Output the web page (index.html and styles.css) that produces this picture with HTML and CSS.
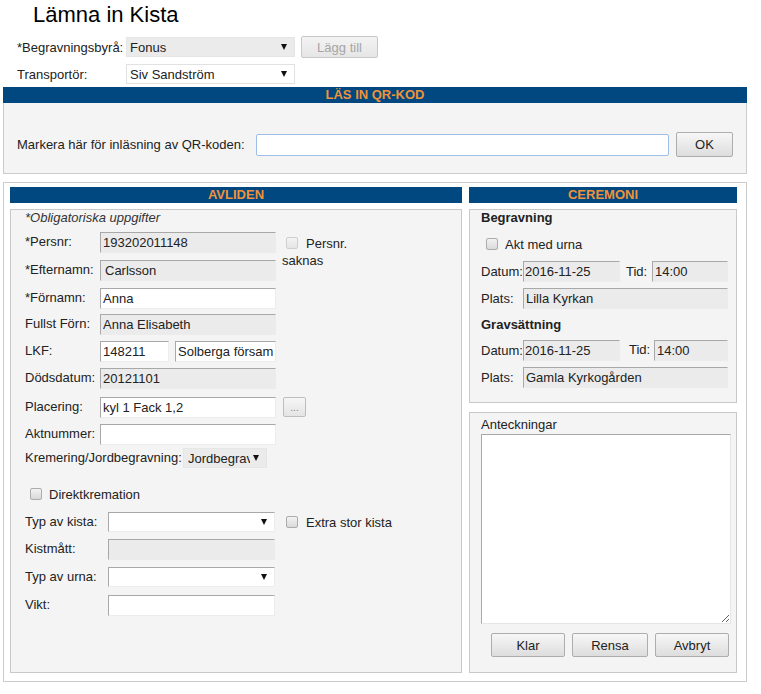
FILE: index.html
```html
<!DOCTYPE html>
<html lang="sv">
<head>
<meta charset="utf-8">
<title>Lämna in Kista</title>
<link rel="stylesheet" href="styles.css">
</head>
<body>
<h1 class="title">Lämna in Kista</h1>

<div class="top-row">
  <label class="top-label">*Begravningsbyrå:</label>
  <span class="select"><select class="sel sel-top sel-gray" disabled><option>Fonus</option></select></span>
  <button class="btn btn-add" disabled>Lägg till</button>
</div>
<div class="top-row top-row-2">
  <label class="top-label">Transportör:</label>
  <span class="select"><select class="sel sel-top sel-light"><option>Siv Sandström</option></select></span>
</div>

<section class="qr">
  <div class="bar">LÄS IN QR-KOD</div>
  <div class="qr-body">
    <div class="qr-row">
      <label class="qr-label">Markera här för inläsning av QR-koden:</label>
      <input class="qr-input" type="text">
      <button class="btn btn-ok">OK</button>
    </div>
  </div>
</section>

<section class="main">
  <div class="col">
    <div class="bar">AVLIDEN</div>
    <div class="fs fs-avliden">
      <div class="note">*Obligatoriska uppgifter</div>

      <div class="grid-person">
        <label class="lbl">*Persnr:</label>
        <input class="inp ro w176" value="193202011148" readonly>
        <div class="saknas"><span class="cb cb-off"></span>Persnr. saknas</div>

        <label class="lbl">*Efternamn:</label>
        <input class="inp ro w176 pad4" value="Carlsson" readonly>

        <label class="lbl">*Förnamn:</label>
        <input class="inp w176" value="Anna">

        <label class="lbl">Fullst Förn:</label>
        <input class="inp ro w176" value="Anna Elisabeth" readonly>

        <label class="lbl">LKF:</label>
        <div class="lkf">
          <input class="inp w69" value="148211">
          <input class="inp w101" value="Solberga församling">
        </div>

        <label class="lbl">Dödsdatum:</label>
        <input class="inp ro w176" value="20121101" readonly>

        <label class="lbl">Placering:</label>
        <input class="inp w176" value="kyl 1 Fack 1,2">
        <button class="btn btn-dots">...</button>

        <label class="lbl">Aktnummer:</label>
        <input class="inp w176" value="">

        <div class="krem">
          <label class="lbl lbl-krem">Kremering/Jordbegravning:</label>
          <span class="select"><select class="sel sel-krem sel-gray"><option>Jordbegravning</option></select></span>
        </div>
      </div>

      <div class="cb-row direkt"><span class="cb"></span>Direktkremation</div>

      <div class="grid-kista">
        <label class="lbl">Typ av kista:</label>
        <span class="select"><select class="sel sel-kista"><option></option></select></span>
        <div class="cb-row extra"><span class="cb"></span>Extra stor kista</div>

        <label class="lbl">Kistmått:</label>
        <input class="inp ro w167" value="" readonly>

        <label class="lbl">Typ av urna:</label>
        <span class="select"><select class="sel sel-kista"><option></option></select></span>

        <label class="lbl">Vikt:</label>
        <input class="inp w167" value="">
      </div>
    </div>
  </div>

  <div class="col">
    <div class="bar">CEREMONI</div>
    <div class="fs fs-cer">
      <div class="sub">Begravning</div>
      <div class="cb-row akt"><span class="cb"></span>Akt med urna</div>
      <div class="cer-row first">
        <label class="cer-lbl">Datum:</label>
        <input class="inp ro w97 tight" value="2016-11-25" readonly>
        <label class="tid">Tid:</label>
        <input class="inp ro w76" value="14:00" readonly>
      </div>
      <div class="cer-row">
        <label class="cer-lbl">Plats:</label>
        <input class="inp ro w205" value="Lilla Kyrkan" readonly>
      </div>
      <div class="sub sub-grav">Gravsättning</div>
      <div class="cer-row second">
        <label class="cer-lbl">Datum:</label>
        <input class="inp ro w97 tight" value="2016-11-25" readonly>
        <label class="tid tid-2">Tid:</label>
        <input class="inp ro w74" value="14:00" readonly>
      </div>
      <div class="cer-row">
        <label class="cer-lbl">Plats:</label>
        <input class="inp ro w205" value="Gamla Kyrkogården" readonly>
      </div>
    </div>

    <div class="fs fs-notes">
      <label class="notes-lbl">Anteckningar</label>
      <textarea class="notes"></textarea>
      <div class="actions">
        <button class="btn btn-act w74">Klar</button>
        <button class="btn btn-act w76b">Rensa</button>
        <button class="btn btn-act w74">Avbryt</button>
      </div>
    </div>
  </div>
</section>
</body>
</html>
```

FILE: styles.css
```css
* { box-sizing: border-box; }

html, body { margin: 0; background: #fff; }

body {
  padding: 0 3px;
  font-family: "Liberation Sans", Arial, sans-serif;
  font-size: 13px;
  color: #222;
}

.title {
  margin: 0;
  padding: 2px 0 0 30px;
  font-size: 22px;
  font-weight: normal;
  line-height: 26px;
  color: #000;
}

/* top rows */
.top-row {
  display: flex;
  align-items: center;
  height: 22px;
  margin-top: 8px;
  padding-left: 14px;
}
.top-row-2 { height: 20px; margin-top: 6px; }
.top-label { width: 109px; }

.select { position: relative; display: inline-block; }
.select::after {
  content: "";
  position: absolute;
  right: 8px;
  top: 50%;
  margin-top: -3px;
  border-left: 3px solid transparent;
  border-right: 3px solid transparent;
  border-top: 6px solid #111;
  pointer-events: none;
}

.sel {
  -webkit-appearance: none;
  appearance: none;
  display: block;
  font: inherit;
  color: #222;
  height: 20px;
  margin: 0;
  padding: 0 16px 0 3px;
  border: 1px solid;
  border-color: #a8a8a8 #ececec #ececec #a8a8a8;
  border-radius: 0;
  background: #fff;
  opacity: 1;
}
.sel-top { width: 169px; }
.sel-gray { background: #ebebeb; border-color: #e6e6e6; color: #222; }
.sel-light { border-color: #e2e2e2; }
.sel-krem { width: 84px; padding-left: 4px; }
.sel-kista { width: 167px; }

.btn {
  font: inherit;
  color: #222;
  margin: 0;
  padding: 0;
  border: 1px solid #adadad;
  border-radius: 2px;
  background: linear-gradient(#f7f7f7, #dddddd);
}
.btn-add {
  margin-left: 6px;
  width: 77px;
  height: 22px;
  color: #a6a6a6;
  border-color: #c8c8c8;
  background: linear-gradient(#f3f3f3, #e6e6e6);
}

/* headers */
.bar {
  height: 16px;
  background: #00487f;
  color: #f0923a;
  font-weight: bold;
  font-size: 13px;
  line-height: 16px;
  text-align: center;
}

/* QR section */
.qr { margin-top: 3px; width: 744px; }
.qr-body {
  height: 71px;
  padding: 29px 0 0 13px;
  border: 1px solid #cccccc;
  border-top: 0;
  background: #f4f4f4;
}
.qr-row { display: flex; align-items: center; height: 25px; }
.qr-label { width: 239px; flex: none; }
.qr-input {
  width: 413px;
  height: 22px;
  font: inherit;
  border: 1px solid #9ec0e8;
  border-radius: 2px;
  background: #fff;
  margin: 0;
}
.btn-ok { margin-left: 7px; width: 57px; height: 25px; }

/* main */
.main {
  margin-top: 8px;
  width: 744px;
  border: 1px solid #cccccc;
  padding: 4px 9px 8px 6px;
  display: grid;
  grid-template-columns: 452px 268px;
  column-gap: 7px;
}

.fs {
  border: 1px solid #c9c9c9;
  background: #f4f4f4;
}
.fs-avliden { margin-top: 6px; height: 464px; padding-left: 14px; }
.note { font-style: italic; line-height: 15px; color: #333; }

.lbl { height: 20px; line-height: 20px; white-space: nowrap; }

.inp {
  height: 21px;
  margin: 0;
  padding: 0 2px;
  font: inherit;
  color: #222;
  border: 1px solid;
  border-color: #a8a8a8 #ececec #ececec #a8a8a8;
  border-radius: 0;
  background: #fff;
}
.ro { background: #ebebeb; }
.pad4 { padding-left: 4px; }
.tight { padding-left: 1px; }
.w176 { width: 176px; }
.w167 { width: 167px; }
.w69 { width: 69px; }
.w101 { width: 101px; }
.w97 { width: 97px; }
.w76 { width: 76px; }
.w74 { width: 74px; }
.w205 { width: 205px; }

.grid-person {
  margin-top: 7px;
  display: grid;
  grid-template-columns: 75px 176px 1fr;
  grid-template-rows: 28px 28px 26px 27px 27px 29px 27px 24px 20px;
  align-items: start;
}
.grid-person > .lbl,
.grid-kista > .lbl { grid-column: 1; }
.saknas {
  grid-column: 3;
  grid-row: 1 / span 2;
  margin-left: 6px;
  padding-top: 3px;
  width: 75px;
  line-height: 17px;
}
.saknas .cb { margin: 0 8px 0 4px; vertical-align: -1px; }

.lkf { display: flex; gap: 6px; }
.btn-dots {
  grid-column: 3;
  justify-self: start;
  margin-left: 7px;
  width: 23px;
  height: 20px;
  font-size: 10px;
  color: #888;
  border-color: #bdbdbd;
  background: linear-gradient(#f6f6f6, #e4e4e4);
}
.krem { grid-column: 1 / -1; display: flex; align-items: center; }
.lbl-krem { width: 158px; }

.cb {
  display: inline-block;
  width: 12px;
  height: 12px;
  border: 1px solid #acacac;
  border-radius: 2px;
  background: linear-gradient(#f2f2f2, #d9d9d9);
  flex: none;
}
.cb-off { border-color: #cfcfcf; background: linear-gradient(#f3f3f3, #e4e4e4); }

.cb-row { display: flex; align-items: center; height: 20px; }
.direkt { margin-top: 16px; padding-left: 5px; }
.direkt .cb { margin-right: 7px; }

.grid-kista {
  margin-top: 8px;
  display: grid;
  grid-template-columns: 83px 167px 1fr;
  grid-template-rows: 27px 28px 28px 21px;
  align-items: start;
}
.extra { grid-column: 3; margin-left: 11px; }
.extra .cb { margin-right: 8px; }

/* ceremoni */
.fs-cer { margin-top: 6px; height: 194px; padding-left: 11px; }
.sub { font-weight: bold; line-height: 15px; color: #222; }
.sub-grav { margin-top: 8px; }
.akt { margin-top: 9px; padding-left: 5px; }
.akt .cb { margin-right: 7px; }

.cer-row { display: flex; align-items: center; height: 21px; margin-top: 6px; }
.cer-row.first { margin-top: 7px; }
.cer-row.second { margin-top: 8px; }
.cer-lbl { width: 42px; flex: none; }
.tid { margin-left: 6px; width: 26px; flex: none; }
.tid-2 { margin-left: 9px; width: 25px; margin-top: -2px; }

.fs-notes { margin-top: 9px; height: 261px; padding: 4px 0 0 11px; }
.notes-lbl { display: block; line-height: 15px; }
.notes {
  display: block;
  margin: 2px 0 0;
  width: 250px;
  height: 190px;
  font: inherit;
  border: 1px solid;
  border-color: #a8a8a8 #e6e6e6 #e6e6e6 #a8a8a8;
  border-radius: 0;
  background: #fff;
}
.actions { display: flex; gap: 7px; margin-top: 9px; padding-left: 10px; }
.btn-act { height: 24px; }
.w76b { width: 76px; }
```
